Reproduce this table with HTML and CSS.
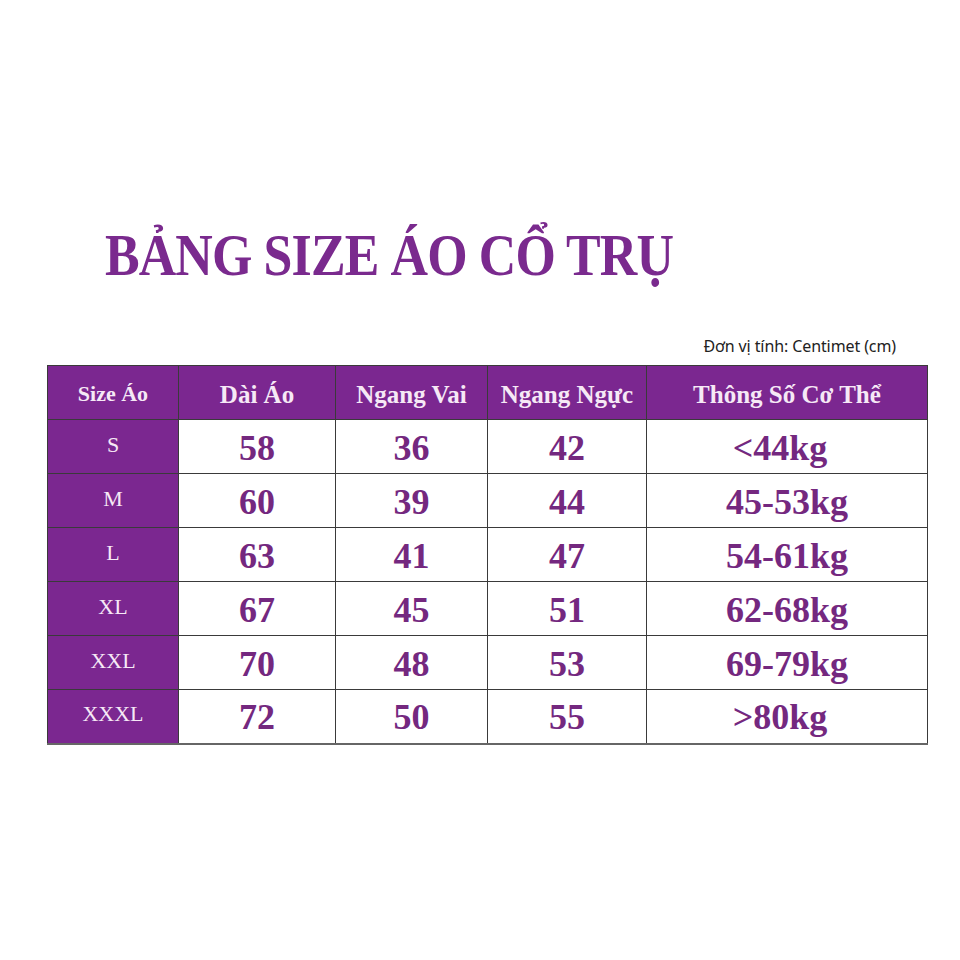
FILE: index.html
```html
<!DOCTYPE html>
<html lang="vi">
<head>
<meta charset="utf-8">
<title>Bảng size áo cổ trụ</title>
<link rel="stylesheet" href="styles.css">
</head>
<body>
<main class="page">
  <h1 class="title">BẢNG SIZE ÁO CỔ TRỤ</h1>
  <p class="unit">Đơn vị tính: Centimet (cm)</p>
  <table class="sizes">
    <colgroup>
      <col class="c1"><col class="c2"><col class="c3"><col class="c4"><col class="c5">
    </colgroup>
    <thead>
      <tr>
        <th class="small">Size Áo</th>
        <th>Dài Áo</th>
        <th>Ngang Vai</th>
        <th>Ngang Ngực</th>
        <th>Thông Số Cơ Thể</th>
      </tr>
    </thead>
    <tbody>
      <tr><th>S</th><td>58</td><td>36</td><td>42</td><td class="kg">&lt;44kg</td></tr>
      <tr><th>M</th><td>60</td><td>39</td><td>44</td><td>45-53kg</td></tr>
      <tr><th>L</th><td>63</td><td>41</td><td>47</td><td>54-61kg</td></tr>
      <tr><th>XL</th><td>67</td><td>45</td><td>51</td><td>62-68kg</td></tr>
      <tr><th>XXL</th><td>70</td><td>48</td><td>53</td><td>69-79kg</td></tr>
      <tr><th>XXXL</th><td>72</td><td>50</td><td>55</td><td class="kg">&gt;80kg</td></tr>
    </tbody>
  </table>
</main>
</body>
</html>
```
FILE: styles.css
```css
html, body {
  margin: 0;
  padding: 0;
  background: #ffffff;
}
.page {
  width: 960px;
  height: 960px;
  box-sizing: border-box;
  padding: 220px 33px 0 47px;
}
.title {
  margin: 0 0 0 58px;
  font-family: "Liberation Serif", "Times New Roman", serif;
  font-weight: bold;
  font-size: 60px;
  line-height: 70px;
  color: #7a2a8e;
  letter-spacing: -1px;
  transform: scaleX(0.865);
  transform-origin: left center;
  white-space: nowrap;
}
.unit {
  margin: 47px 0 0 0;
  padding-right: 31px;
  text-align: right;
  font-family: "Noto Sans", "Open Sans", sans-serif;
  font-size: 16px;
  line-height: 19px;
  color: #222;
  letter-spacing: -0.1px;
}
.sizes {
  margin-top: 9px;
  width: 880px;
  border-collapse: collapse;
  table-layout: fixed;
  font-family: "Liberation Serif", "Times New Roman", serif;
}
.c1 { width: 131px; }
.c2 { width: 157px; }
.c3 { width: 152px; }
.c4 { width: 159px; }
.c5 { width: 281px; }
.sizes th, .sizes td {
  border: 1px solid #3a3a3a;
  text-align: center;
  padding: 0;
  height: 54px;
  line-height: 1;
  box-sizing: border-box;
}
.sizes thead th {
  background: #7b2790;
  color: #f6e9f6;
  font-weight: bold;
  font-size: 25px;
  padding-top: 3px;
}
.sizes thead th.small {
  font-size: 22px;
}
.sizes tbody th {
  background: #7b2790;
  color: #f6e9f6;
  font-weight: normal;
  font-size: 22px;
  padding-bottom: 4px;
}
.sizes tbody td {
  color: #74287f;
  font-weight: bold;
  font-size: 36px;
  padding-top: 2px;
}
.sizes tbody td.kg {
  padding-right: 14px;
}
.sizes tbody tr:last-child td,
.sizes tbody tr:last-child th {
  border-bottom: 2px solid #666;
}
```
